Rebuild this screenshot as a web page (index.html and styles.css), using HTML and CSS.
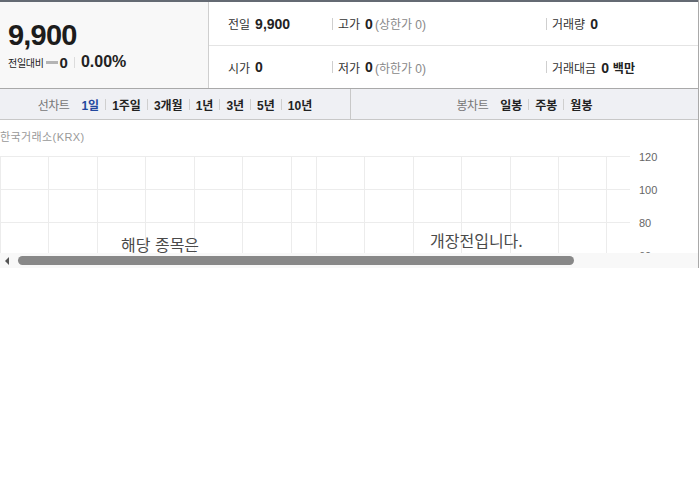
FILE: index.html
```html
<!DOCTYPE html>
<html lang="ko">
<head>
<meta charset="utf-8">
<title>시세</title>
<link rel="stylesheet" href="styles.css">
</head>
<body>
<div class="widget">
  <div class="topbar"></div>
  <div class="summary">
    <div class="price-box">
      <div class="price">9,900</div>
      <div class="change">
        <span class="change-label">전일대비</span>
        <span class="flat-bar"></span>
        <span class="change-val">0</span>
        <span class="vsep"></span>
        <span class="change-rate">0.00%</span>
      </div>
    </div>
    <div class="info">
      <div class="info-row">
        <div class="cell"><span class="lbl">전일</span><b class="val">9,900</b></div>
        <div class="cell sep"><span class="lbl">고가</span><b class="val">0</b><span class="sub">(상한가 0)</span></div>
        <div class="cell sep"><span class="lbl">거래량</span><b class="val">0</b></div>
      </div>
      <div class="info-row">
        <div class="cell"><span class="lbl">시가</span><b class="val">0</b></div>
        <div class="cell sep"><span class="lbl">저가</span><b class="val">0</b><span class="sub">(하한가 0)</span></div>
        <div class="cell sep"><span class="lbl">거래대금</span><b class="val">0 <span class="unit">백만</span></b></div>
      </div>
    </div>
  </div>
  <div class="tabs">
    <div class="tab-group left">
      <span class="tab-title">선차트</span>
      <span class="tab on">1일</span>
      <span class="tsep"></span>
      <span class="tab">1주일</span>
      <span class="tsep"></span>
      <span class="tab">3개월</span>
      <span class="tsep"></span>
      <span class="tab">1년</span>
      <span class="tsep"></span>
      <span class="tab">3년</span>
      <span class="tsep"></span>
      <span class="tab">5년</span>
      <span class="tsep"></span>
      <span class="tab">10년</span>
    </div>
    <div class="tab-group">
      <span class="tab-title">봉차트</span>
      <span class="tab">일봉</span>
      <span class="tsep"></span>
      <span class="tab">주봉</span>
      <span class="tsep"></span>
      <span class="tab">월봉</span>
    </div>
  </div>
  <div class="chart">
    <div class="source">한국거래소(KRX)</div>
    <svg class="grid" width="698" height="133" viewBox="0 0 698 133">
      <g stroke="#ececec" stroke-width="1">
        <line x1="0" y1="36.5" x2="630" y2="36.5"/>
        <line x1="0" y1="69.5" x2="630" y2="69.5"/>
        <line x1="0" y1="102.5" x2="630" y2="102.5"/>
        <line x1="0.5" y1="36" x2="0.5" y2="133"/>
        <line x1="48.5" y1="36" x2="48.5" y2="133"/>
        <line x1="97.5" y1="36" x2="97.5" y2="133"/>
        <line x1="145.5" y1="36" x2="145.5" y2="133"/>
        <line x1="194.5" y1="36" x2="194.5" y2="133"/>
        <line x1="242.5" y1="36" x2="242.5" y2="133"/>
        <line x1="291.5" y1="36" x2="291.5" y2="133"/>
        <line x1="316.5" y1="36" x2="316.5" y2="133"/>
        <line x1="364.5" y1="36" x2="364.5" y2="133"/>
        <line x1="413.5" y1="36" x2="413.5" y2="133"/>
        <line x1="461.5" y1="36" x2="461.5" y2="133"/>
        <line x1="510.5" y1="36" x2="510.5" y2="133"/>
        <line x1="558.5" y1="36" x2="558.5" y2="133"/>
        <line x1="606.5" y1="36" x2="606.5" y2="133"/>
      </g>
      <g class="axis">
        <text x="639" y="41">120</text>
        <text x="639" y="74">100</text>
        <text x="639" y="107">80</text>
        <text x="639" y="140">60</text>
      </g>
    </svg>
    <div class="notice n1">해당 종목은</div>
    <div class="notice n2">개장전입니다.</div>
  </div>
  <div class="scroll">
    <span class="arrow"></span>
    <span class="thumb"></span>
  </div>
</div>
</body>
</html>
```

FILE: styles.css
```css
html, body {
  margin: 0;
  padding: 0;
  background: #fff;
}
body {
  font-family: "Liberation Sans", "Noto Sans CJK KR", sans-serif;
  color: #222;
}
.widget {
  width: 699px;
  border-right: 1px solid #a9a9a9;
  box-sizing: border-box;
}
.topbar {
  height: 2px;
  background: #646a73;
}
.summary {
  display: flex;
  height: 87px;
  border-bottom: 1px solid #a9a9a9;
  box-sizing: border-box;
}
.price-box {
  width: 209px;
  box-sizing: border-box;
  border-right: 1px solid #cfcfcf;
  background: #f8f8f8;
  padding: 17px 0 0 8px;
}
.price {
  font-size: 29px;
  font-weight: bold;
  line-height: 32px;
  letter-spacing: -0.8px;
  color: #1c1c1c;
}
.change {
  display: flex;
  align-items: center;
  height: 20px;
  margin-top: 1px;
}
.change-label {
  font-size: 10px;
  letter-spacing: -0.3px;
  color: #222;
}
.flat-bar {
  width: 12px;
  height: 3px;
  background: #b4b4b4;
  margin: 1px 2px 0 2px;
}
.change-val {
  font-size: 15px;
  font-weight: bold;
}
.vsep {
  width: 1px;
  height: 11px;
  background: #dcdcdc;
  margin: 0 6px 0 6px;
}
.change-rate {
  font-size: 16px;
  font-weight: bold;
}
.info {
  flex: 1;
  display: flex;
  flex-direction: column;
}
.info-row {
  display: grid;
  grid-template-columns: 104px 214px 1fr;
  padding-left: 19px;
  align-items: center;
  flex: 1;
}
.info-row:first-child {
  border-bottom: 1px solid #e4e4e4;
  flex: 0 0 44px;
  box-sizing: border-box;
}
.cell {
  display: flex;
  align-items: center;
  white-space: nowrap;
}
.cell.sep::before {
  content: "";
  width: 1px;
  height: 12px;
  background: #cfcfcf;
  margin-right: 5px;
}
.lbl {
  font-size: 12px;
  color: #333;
  margin-right: 5px;
}
.val {
  font-size: 14px;
  font-weight: bold;
  color: #222;
}
.unit {
  font-size: 12px;
}
.sub {
  font-size: 12px;
  color: #888;
  margin-left: 2px;
}
.tabs {
  display: flex;
  height: 31px;
  background: #eff0f4;
  border-bottom: 1px solid #c8c8c8;
  box-sizing: border-box;
}
.tab-group {
  flex: 1;
  display: flex;
  align-items: center;
  justify-content: center;
}
.tab-group.left {
  flex: 0 0 351px;
  box-sizing: border-box;
  border-right: 1px solid #c8c8c8;
}
.tab-title {
  font-size: 12px;
  color: #777;
  margin-right: 12px;
  letter-spacing: -0.5px;
}
.tab {
  font-size: 12px;
  font-weight: bold;
  color: #222;
}
.tab.on {
  color: #22489e;
}
.tsep {
  width: 1px;
  height: 11px;
  background: #cfcfcf;
  margin: 0 6px;
}
.chart {
  position: relative;
  height: 133px;
  overflow: hidden;
}
.source {
  font-size: 11px;
  color: #999;
  line-height: 14px;
  padding-top: 10px;
  letter-spacing: 0.4px;
}
.grid {
  position: absolute;
  left: 0;
  top: 0;
}
.axis text {
  font-family: "Liberation Sans", sans-serif;
  font-size: 11px;
  fill: #666;
}
.notice {
  position: absolute;
  font-family: "Noto Sans CJK KR", sans-serif;
  font-size: 16px;
  line-height: 18px;
  color: #4a4a4a;
}
.n1 {
  left: 121px;
  top: 115px;
}
.n2 {
  left: 430px;
  top: 111px;
}
.scroll {
  display: flex;
  align-items: center;
  height: 15px;
  background: #f8f8f8;
}
.arrow {
  width: 0;
  height: 0;
  border-top: 4px solid transparent;
  border-bottom: 4px solid transparent;
  border-right: 4px solid #555;
  margin-left: 5px;
}
.thumb {
  width: 556px;
  height: 9px;
  border-radius: 5px;
  background: #888;
  margin-left: 9px;
}
```
